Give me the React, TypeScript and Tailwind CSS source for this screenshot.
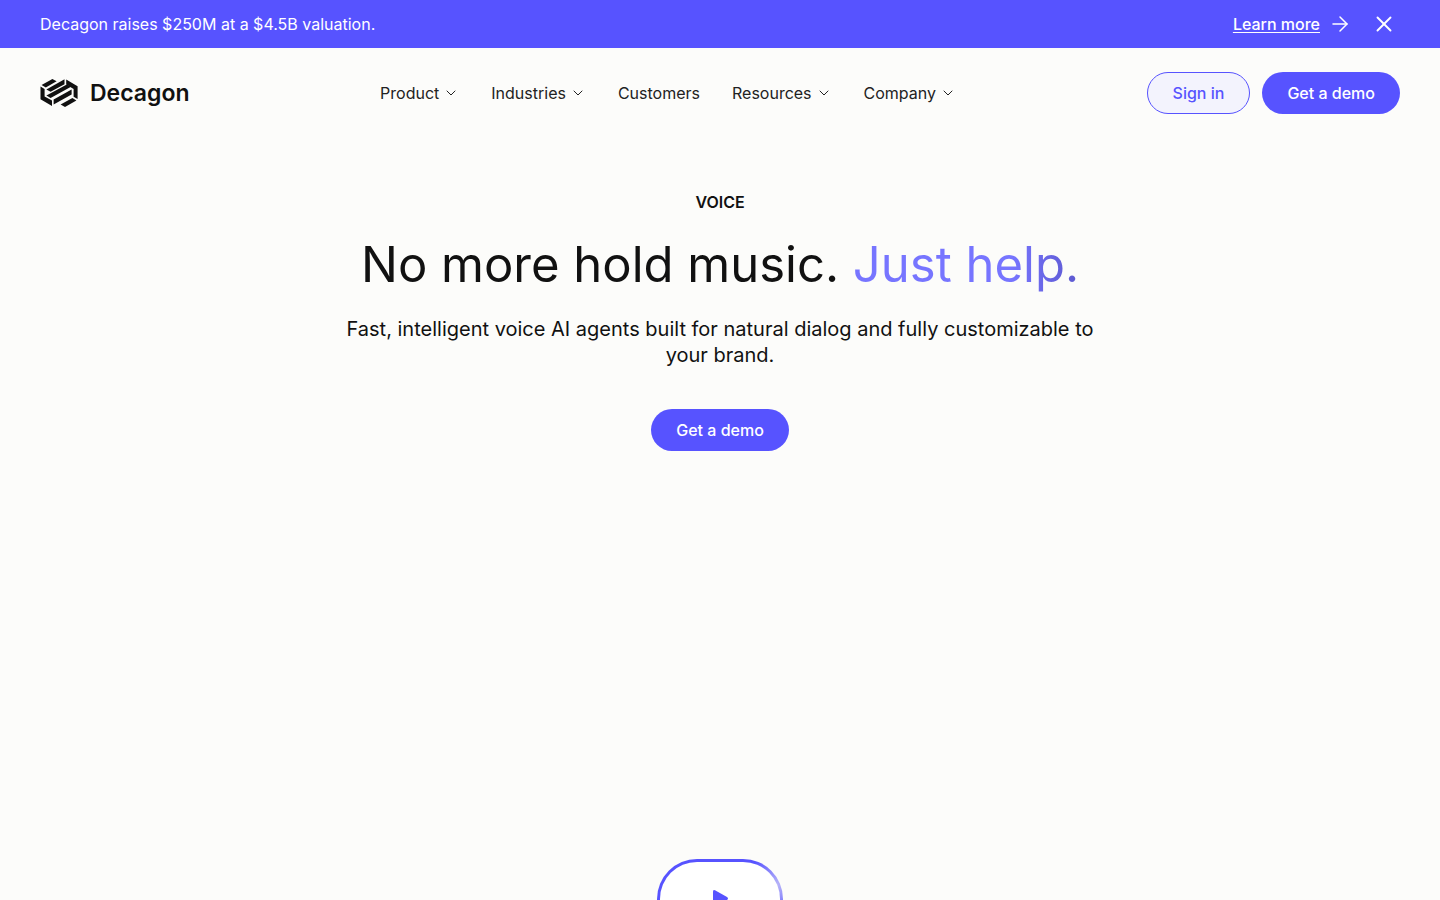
import { ArrowRight, ChevronDown, X } from 'lucide-react';

const navItems = [
  { label: 'Product', hasMenu: true },
  { label: 'Industries', hasMenu: true },
  { label: 'Customers', hasMenu: false },
  { label: 'Resources', hasMenu: true },
  { label: 'Company', hasMenu: true },
];

function Logo() {
  return (
    <a href="#" className="flex items-center gap-3 text-[#111111]">
      <svg width="38" height="28" viewBox="0 0 38 28" fill="currentColor" aria-hidden="true">
        <path d="M0.5 7.6 4.6 10V17.4L12 21.6V27L0.5 20.2Z" />
        <path d="M1.6 6 12.4 0 16.6 2.3 5.8 8.4Z" />
        <path d="M6.4 10.4 24.5 0.3V5.2L10.6 12.8Z" />
        <path d="M6.4 16.6 26.8 5.4 31 7.8 10.6 19Z" />
        <path d="M13.6 20.4 31.6 10.4V15.4L13.6 25.4Z" />
        <path d="M26.2 0.6 37.6 7.2V20L33.6 17.8V10L26.2 5.6Z" />
        <path d="M20.6 25.6 32.4 19 36.4 21.4 25 28Z" />
      </svg>
      <span className="text-[23px] leading-8 font-semibold">Decagon</span>
    </a>
  );
}

export default function App() {
  return (
    <div className="h-screen overflow-hidden bg-[#fcfcfa] font-['Inter',sans-serif] text-base text-[#111111]">
      <div className="flex h-12 items-center justify-between bg-[#5753ff] px-10 text-white">
        <p>Decagon raises $250M at a $4.5B valuation.</p>
        <div className="flex items-center gap-4">
          <a href="#" className="flex items-center gap-2 font-medium">
            <span className="underline underline-offset-2">Learn more</span>
            <ArrowRight size={24} strokeWidth={1.5} />
          </a>
          <button type="button" aria-label="Close" className="flex size-8 items-center justify-center">
            <X size={26} strokeWidth={1.75} />
          </button>
        </div>
      </div>

      <header className="flex items-center justify-between px-10 py-6">
        <Logo />
        <nav className="flex items-center gap-8 text-[#222222]">
          {navItems.map((item) =>
            item.hasMenu ? (
              <button key={item.label} type="button" className="flex items-center gap-1">
                {item.label}
                <ChevronDown size={16} strokeWidth={1.5} />
              </button>
            ) : (
              <a key={item.label} href="#">
                {item.label}
              </a>
            )
          )}
        </nav>
        <div className="flex gap-3 font-medium">
          <a
            href="#"
            className="flex h-[42px] items-center rounded-full border border-[#5753ff] bg-[#f3f3fd] px-[25px] text-[#5753ff]"
          >
            Sign in
          </a>
          <button type="button" className="h-[42px] rounded-full bg-[#5753ff] px-[25px] text-white">
            Get a demo
          </button>
        </div>
      </header>

      <main className="flex flex-col items-center pt-13 text-center">
        <p className="font-semibold">VOICE</p>
        <h1 className="mt-5 text-[49px] leading-[62px]">
          No more hold music.{' '}
          <span className="bg-linear-to-r from-[#7775ff] from-70% to-[#5d59cf] bg-clip-text text-transparent">
            Just help.
          </span>
        </h1>
        <p className="mt-5 max-w-[760px] text-xl leading-[26px]">
          Fast, intelligent voice AI agents built for natural dialog and fully customizable to your brand.
        </p>
        <button type="button" className="mt-[41px] h-[42px] rounded-full bg-[#5753ff] px-[25px] font-medium text-white">
          Get a demo
        </button>
        <button
          type="button"
          aria-label="Play"
          className="mt-102 rounded-[40px] bg-[radial-gradient(circle_at_120px_26px,#b9b6f8,#5753ff_32px)] p-[3px]"
        >
          <span className="flex h-[74px] w-30 items-center justify-center rounded-[37px] bg-white">
            <svg width="18" height="20" viewBox="0 0 18 20" fill="#5753ff" aria-hidden="true">
              <path d="M2 2.5Q2 0.2 4 1.3L16 8Q18 9.5 16 11L4 18.6Q2 19.6 2 17.5Z" />
            </svg>
          </span>
        </button>
      </main>
    </div>
  );
}
